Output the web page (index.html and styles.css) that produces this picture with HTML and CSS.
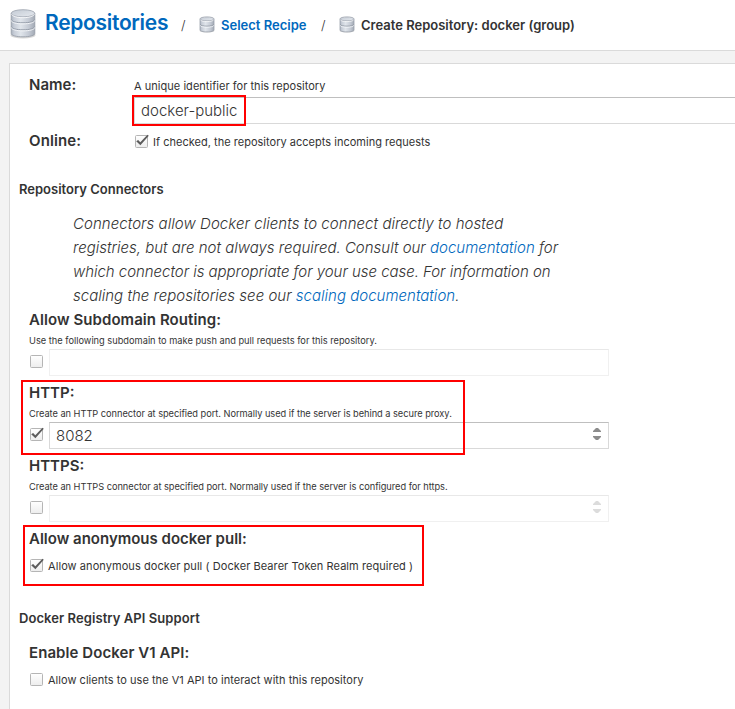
FILE: index.html
```html
<!DOCTYPE html>
<html lang="en">
<head>
<meta charset="utf-8">
<title>Create Repository</title>
<link rel="stylesheet" href="styles.css">
</head>
<body>
<svg class="defs" width="0" height="0" aria-hidden="true">
  <defs>
    <linearGradient id="side" x1="0" x2="1" y1="0" y2="0">
      <stop offset="0" stop-color="#a9b1bd"/><stop offset=".12" stop-color="#c6ccd6"/>
      <stop offset=".4" stop-color="#e0e5eb"/><stop offset=".75" stop-color="#c3c9d3"/><stop offset="1" stop-color="#a3aab5"/>
    </linearGradient>
    <linearGradient id="lid" x1="0" x2="1" y1="0" y2="1">
      <stop offset="0" stop-color="#c3cad4"/><stop offset="1" stop-color="#e6eaef"/>
    </linearGradient>
    <linearGradient id="box" x1="0" x2="0" y1="0" y2="1">
      <stop offset="0" stop-color="#fff"/><stop offset="1" stop-color="#ededed"/>
    </linearGradient>
    <symbol id="db-lg" viewBox="0 0 26 30">
      <ellipse cx="13" cy="26" rx="12.5" ry="3.6" fill="#000" opacity=".16"/>
      <path d="M1.200 4.500v20c0 2 5 3.300 11.800 3.300s11.800-1.300 11.800-3.300v-20z" fill="url(#side)" stroke="#9299a4" stroke-width=".8"/>
      <path d="M1.400 10.500c0 2 5 3.300 11.600 3.300s11.600-1.300 11.600-3.300M1.400 17.500c0 2 5 3.300 11.600 3.300s11.600-1.300 11.600-3.300" fill="none" stroke="#969eaa" stroke-width="1"/>
      <path d="M1.400 11.600c0 2 5 3.300 11.600 3.300s11.600-1.300 11.600-3.300M1.400 18.600c0 2 5 3.300 11.600 3.300s11.600-1.300 11.600-3.300" fill="none" stroke="#f2f4f7" stroke-width="1"/>
      <ellipse cx="13" cy="4.300" rx="11.800" ry="3.600" fill="url(#lid)" stroke="#9aa1ac" stroke-width=".8"/>
      <path d="M1.600 5.400c1 1.900 5.500 3.300 11.400 3.300s10.400-1.400 11.400-3.300" fill="none" stroke="#fafbfc" stroke-width=".9"/>
    </symbol>
    <symbol id="db-sm" viewBox="0 0 16 17">
      <ellipse cx="8" cy="14.800" rx="7.500" ry="1.800" fill="#000" opacity=".15"/>
      <path d="M1 3v11c0 1.100 3 1.900 7 1.900s7-.8 7-1.900V3z" fill="url(#side)" stroke="#9aa1ac" stroke-width=".8"/>
      <path d="M1.200 8.500c.5 1.100 3.300 1.700 6.800 1.700s6.300-.6 6.800-1.700" fill="none" stroke="#8f96a2" stroke-width=".9"/>
      <path d="M1.300 9.500c.5 1.100 3.300 1.700 6.700 1.700s6.200-.6 6.700-1.700" fill="none" stroke="#f5f7fa" stroke-width=".9"/>
      <ellipse cx="8" cy="2.900" rx="7" ry="2" fill="url(#lid)" stroke="#9aa1ac" stroke-width=".8"/>
      <path d="M1.500 4c.8 1 3.300 1.600 6.500 1.600s5.700-.6 6.500-1.600" fill="none" stroke="#fafbfc" stroke-width=".8"/>
    </symbol>
    <symbol id="off" viewBox="0 0 15 15">
      <rect x=".5" y="1.500" width="12" height="12" rx="1" fill="url(#box)" stroke="#b5b5b5"/>
    </symbol>
    <symbol id="on" viewBox="0 0 15 15">
      <rect x=".5" y="1.500" width="12" height="12" rx="1" fill="url(#box)" stroke="#b5b5b5"/>
      <path d="M1.200 7.300 3.100 5.900l2.200 2.300L12.400.7l1.400 1.100L5.400 11.300z" fill="#5c5c5c"/>
    </symbol>
    <symbol id="spin" viewBox="0 0 8 12">
      <path d="M0 4V3l3-3h2l3 3v1zM0 8v1l3 3h2l3-3V8z" fill="currentColor"/>
    </symbol>
  </defs>
</svg>

<header class="crumbs">
  <svg class="db-lg"><use href="#db-lg"/></svg>
  <a class="crumb-main">Repositories</a>
  <span class="sep">/</span>
  <svg class="db-sm"><use href="#db-sm"/></svg>
  <a class="crumb link">Select Recipe</a>
  <span class="sep sep-b">/</span>
  <svg class="db-sm"><use href="#db-sm"/></svg>
  <span class="crumb">Create Repository: docker (group)</span>
</header>

<main class="panel">
  <div class="row">
    <div class="label">Name:</div>
    <div class="field">
      <div class="text t-id">A unique identifier for this repository</div>
      <div class="input name-input">docker-public<span class="mark mark-name"></span></div>
    </div>
  </div>
  <div class="row row-online">
    <div class="label online">Online:</div>
    <div class="check"><svg class="cb"><use href="#on"/></svg><span class="text t-online">If checked, the repository accepts incoming requests</span></div>
  </div>

  <h2 class="section">Repository Connectors</h2>
  <p class="intro">
    <span class="l1">Connectors allow Docker clients to connect directly to hosted</span>
    <span class="l2">registries, but are not always required. Consult our <a>documentation</a> for</span>
    <span class="l3">which connector is appropriate for your use case. For information on</span>
    <span class="l4">scaling the repositories see our <a>scaling documentation</a>.</span>
  </p>

  <section class="group">
    <div class="label sub">Allow Subdomain Routing:</div>
    <div class="hint">Use the following subdomain to make push and pull requests for this repository.</div>
    <div class="port"><svg class="cb"><use href="#off"/></svg><div class="input disabled"></div></div>
  </section>
  <section class="group">
    <div class="label">HTTP:</div>
    <div class="hint tight">Create an HTTP connector at specified port. Normally used if the server is behind a secure proxy.</div>
    <div class="port"><svg class="cb"><use href="#on"/></svg><div class="input">8082<svg class="spin"><use href="#spin"/></svg></div></div>
    <span class="mark mark-http"></span>
  </section>
  <section class="group">
    <div class="label">HTTPS:</div>
    <div class="hint tight">Create an HTTPS connector at specified port. Normally used if the server is configured for https.</div>
    <div class="port"><svg class="cb"><use href="#off"/></svg><div class="input disabled"><svg class="spin"><use href="#spin"/></svg></div></div>
  </section>
  <section class="group">
    <div class="label">Allow anonymous docker pull:</div>
    <div class="check below"><svg class="cb"><use href="#on"/></svg><span class="text t-anon">Allow anonymous docker pull ( Docker Bearer Token Realm required )</span></div>
    <span class="mark mark-anon"></span>
  </section>

  <h2 class="section section-api">Docker Registry API Support</h2>
  <section class="group">
    <div class="label sub">Enable Docker V1 API:</div>
    <div class="check below"><svg class="cb"><use href="#off"/></svg><span class="text t-v1">Allow clients to use the V1 API to interact with this repository</span></div>
  </section>
</main>
</body>
</html>
```
FILE: styles.css
```css
* { box-sizing: border-box; }
html, body { height: 100%; }
body {
  margin: 0;
  display: flex;
  flex-direction: column;
  background: #f3f3f3;
  color: #333;
  font-family: Inter, "Liberation Sans", sans-serif;
  white-space: nowrap;
}
svg { display: block; flex: none; }
.defs { position: absolute; }
a { color: #0068bd; }

.crumbs {
  flex: none;
  display: flex;
  align-items: flex-start;
  height: 51px;
  padding-left: 10px;
  background: #fff;
  border-bottom: 1px solid #dadada;
}
.db-lg { width: 26px; height: 30px; margin-top: 9px; }
.crumb-main {
  width: 126px;
  margin: 9px 0 0 9px;
  font-size: 21px;
  font-weight: 600;
  line-height: 28px;
  letter-spacing: -0.3px;
}
.sep { width: 7px; margin: 15px 11px 0 10px; font-size: 13px; font-weight: 300; line-height: 20px; }
.db-sm { width: 16px; height: 17px; margin-top: 16px; }
.crumb { margin: 15px 0 0 6px; font-size: 13px; font-weight: 600; line-height: 20px; }
.crumb.link { width: 87px; }
.sep-b { margin-left: 13px; }

.panel {
  flex: 1;
  min-height: 0;
  margin: 12px 0 0 9px;
  padding-top: 11px;
  background: #fff;
  border: solid #dadada;
  border-width: 1px 0 0 1px;
}
.row { display: flex; padding-left: 19px; }
.row .label { width: 105px; }
.row-online { margin-top: 7px; }
.label { font-size: 15px; font-weight: 600; line-height: 20px; }
.label.sub { letter-spacing: 0.07px; }
.label.online { letter-spacing: 0.1px; }
.text { font-size: 11px; line-height: 16px; }
.t-id { margin-top: 3px; letter-spacing: 0.035px; }
.t-online { letter-spacing: 0.02px; }
.t-anon { letter-spacing: 0.07px; }
.t-v1 { letter-spacing: 0.03px; }
.field { flex: 1; }
.input {
  position: relative;
  flex: 1;
  height: 27px;
  padding-left: 6px;
  border: 1px solid #d9d9d9;
  border-top-color: #bfbfbf;
  font-size: 15px;
  font-weight: 300;
  line-height: 25px;
}
.name-input { margin-top: 3px; border-right: 0; }
.input.disabled { border-color: #f0f0f0; border-top-color: #e8e8e8; }
.check { display: flex; padding-top: 3px; }
.check.below { padding-top: 9px; }
.cb { width: 15px; height: 15px; margin-right: 4px; }
.row .cb { margin-left: 1px; margin-right: 3px; }

.section { margin: 28px 0 0 9px; font-size: 13px; font-weight: 600; line-height: 20px; }
.section-api { margin: 34px 0 15px 9px; letter-spacing: 0.07px; }
.intro { margin: 13px 0 2px 63px; font-size: 15px; font-weight: 300; font-style: italic; line-height: 24px; }
.intro span { display: block; }
.l1 { letter-spacing: 0.055px; }
.l2 { letter-spacing: 0; }
.l3 { letter-spacing: -0.035px; }
.l4 { letter-spacing: 0.015px; }

.group { position: relative; width: 580px; margin: 0 0 7px 19px; }
.hint { margin: 5px 0 2px; font-size: 9.25px; line-height: 12px; }
.hint.tight { letter-spacing: -0.035px; }
.port { display: flex; }
.port .cb { margin: 5px 4px 0 1px; }
.group .below .cb { margin: 0 3px 0 1px; }
.spin { position: absolute; right: 7px; top: 5px; width: 8px; height: 12px; color: #8c8c8c; }
.disabled .spin { color: #dcdcdc; }

.mark { position: absolute; border: 2px solid #f00; }
.mark-name { left: -3px; top: -3px; width: 114px; height: 31px; }
.mark-http { left: -8px; top: -3px; width: 444px; height: 75px; }
.mark-anon { left: -6px; top: -4px; width: 401px; height: 61px; }
```
